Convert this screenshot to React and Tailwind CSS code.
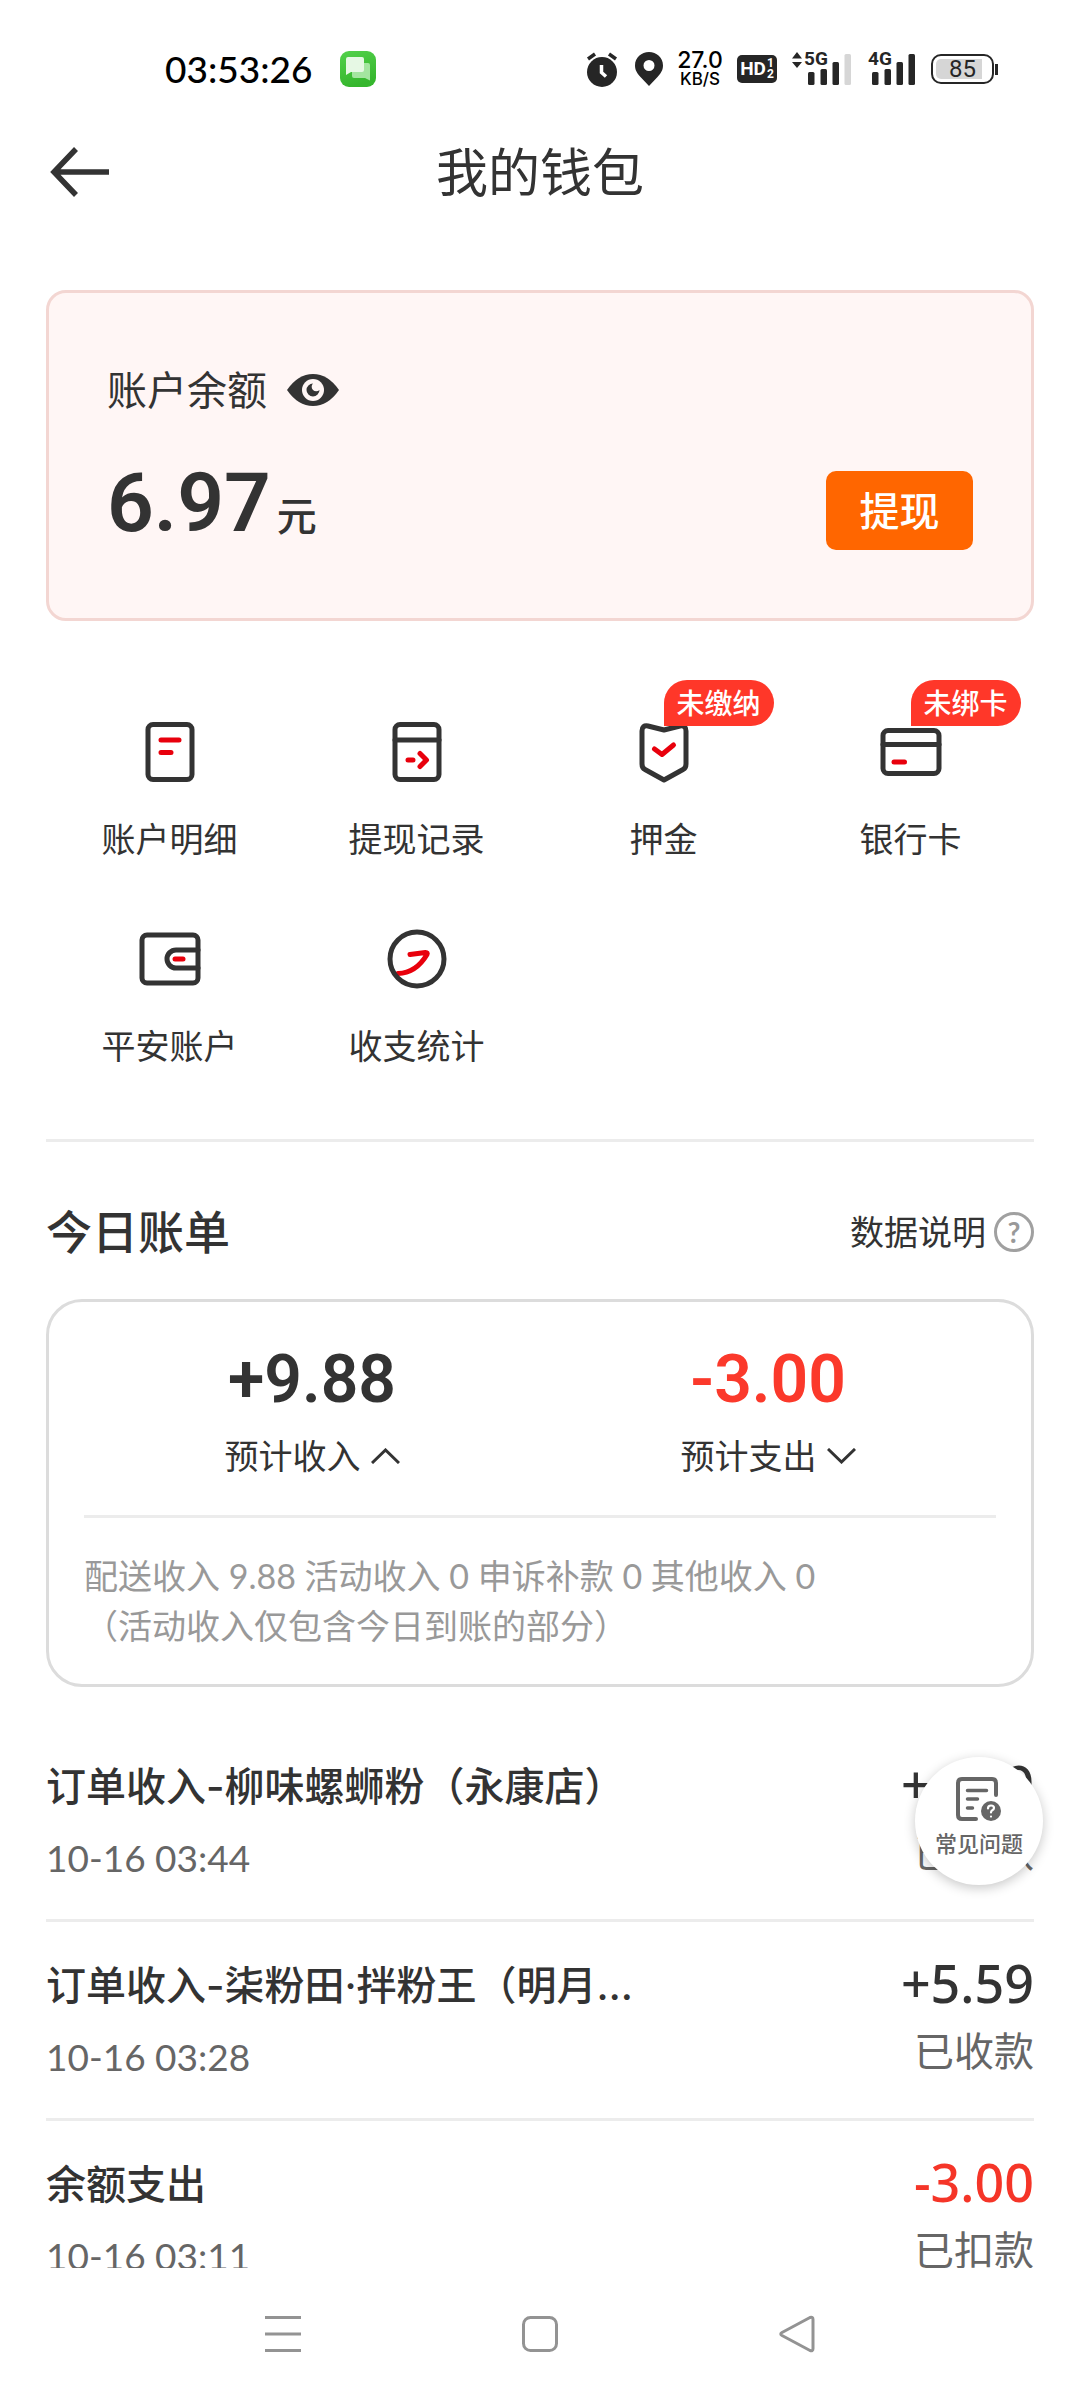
import React from "react";

const INK = "#333333";
const RED = "#e8000c";

function AlarmIcon() {
  return (
    <svg className="h-9 w-8" viewBox="0 0 32 36" aria-hidden="true">
      <circle cx="16" cy="21" r="15" fill="#262626" />
      <path d="M2 8 9 3M30 8 23 3" stroke="#262626" strokeWidth="3.5" />
      <path d="M15.500 14v7.500l4.500 4" fill="none" stroke="#fff" strokeWidth="3.500" />
    </svg>
  );
}

function PinIcon() {
  return (
    <svg className="h-9 w-7" viewBox="0 0 28 36" aria-hidden="true">
      <path
        d="M14 1C6.500 1 0 6.500 0 14.500c0 5 2.500 8 5.500 11.500L14 35l8.500-9c3-3.500 5.500-6.500 5.500-11.500C28 6.500 21.500 1 14 1Zm0 8a5.500 5.500 0 1 1 0 11 5.500 5.500 0 0 1 0-11Z"
        fill="#262626"
      />
    </svg>
  );
}

function MessageAppIcon() {
  return (
    <svg className="size-9" viewBox="0 0 36 36" aria-hidden="true">
      <defs>
        <linearGradient id="msg" x1="0" y1="0" x2="0.3" y2="1">
          <stop offset="0" stopColor="#53d14b" />
          <stop offset="1" stopColor="#35b62d" />
        </linearGradient>
      </defs>
      <rect width="36" height="36" rx="9" fill="url(#msg)" />
      <path d="M13 12h15q2 0 2 2v15.500L25 27H14q-2 0-2-2V14Z" fill="#a4e5a0" />
      <path d="M8 6h14q2 0 2 2v11q0 2-2 2H11l-5 3V8q0-2 2-2Z" fill="#e6f8e4" />
    </svg>
  );
}

function Signal({ label, last, arrows }) {
  return (
    <span className="relative block h-9 w-[60px]">
      <svg className="h-9 w-[60px]" viewBox="0 0 60 36" aria-hidden="true">
        {arrows && <path d="M0 7.500 5 1l5 6.500ZM0 11l5 6 5-6Z" fill="#262626" />}
        <rect x="16" y="21" width="6.500" height="13" rx="1.500" fill="#262626" />
        <rect x="28.500" y="18" width="6.500" height="16" rx="1.500" fill="#262626" />
        <rect x="40.500" y="11" width="6.500" height="23" rx="1.500" fill="#262626" />
        <rect x="52.500" y="3" width="6.500" height="31" rx="1.500" fill={last} />
      </svg>
      <span className="absolute left-3 top-0 font-['Roboto',sans-serif] text-[19px] leading-4 font-bold text-[#262626]">
        {label}
      </span>
    </span>
  );
}

function StatusBar() {
  return (
    <div className="flex h-[138px] shrink-0 items-center justify-between pl-[165px] pr-[82px] text-black">
      <div className="flex items-center gap-7">
        <span className="text-[37px] leading-[44px] font-medium">03:53:26</span>
        <MessageAppIcon />
      </div>
      <div className="flex items-center">
        <AlarmIcon />
        <span className="ml-[17px]"><PinIcon /></span>
        <span className="ml-3 flex w-[50px] flex-col items-center font-['Inter',sans-serif] font-medium">
          <span className="text-[23px] leading-5">27.0</span>
          <span className="text-[17px] leading-[18px]">KB/S</span>
        </span>
        <span className="ml-3 flex h-7 w-10 items-center justify-center gap-px rounded-[5px] bg-[#262626] font-['Roboto',sans-serif] font-bold text-white">
          <span className="text-[19px] leading-7">HD</span>
          <span className="flex flex-col text-xs leading-[11px]">
            <span>1</span>
            <span>2</span>
          </span>
        </span>
        <span className="ml-[15px]"><Signal label="5G" last="#d6d6d6" arrows /></span>
        <span className="ml-1"><Signal label="4G" last="#262626" /></span>
        <span className="ml-[15px] flex items-center gap-px">
          <span className="flex h-[30px] w-[63px] items-center rounded-[10px] border-2 border-[#262626] p-[3px]">
            <span className="flex h-full w-[46px] items-center justify-end rounded-l-[5px] bg-[#d6d6d6] pr-[6px] font-['Roboto',sans-serif] text-2xl leading-5 text-[#262626]">
              85
            </span>
          </span>
          <span className="h-[11px] w-[3px] bg-[#262626]" />
        </span>
      </div>
    </div>
  );
}

function EyeIcon() {
  return (
    <svg className="h-8 w-[52px]" viewBox="0 0 52 32" aria-hidden="true">
      <path d="M0 16Q11 0 26 0t26 16Q41 32 26 32T0 16Z" fill={INK} />
      <circle cx="26" cy="16" r="11" fill="#fff6f5" />
      <path d="M26 9.500a6.500 6.500 0 1 0 6.500 6.500 4.500 4.500 0 0 1-6.500-6.500Z" fill={INK} />
    </svg>
  );
}

const stroke = { fill: "none", strokeWidth: 5, strokeLinecap: "round", strokeLinejoin: "round" };

function Icon({ children }) {
  return (
    <svg className="size-[72px]" viewBox="0 0 72 72" aria-hidden="true" {...stroke} stroke={INK}>
      {children}
    </svg>
  );
}

const services = [
  {
    label: "账户明细",
    icon: (
      <Icon>
        <rect x="14" y="8.500" width="44" height="55" rx="5" />
        <path d="M27 24h18M27 36.500h10" stroke={RED} />
      </Icon>
    ),
  },
  {
    label: "提现记录",
    icon: (
      <Icon>
        <rect x="14" y="8.500" width="44" height="55" rx="5" />
        <path d="M14 24h44" />
        <path d="M27 44h5M39 37.500l6.500 6.500-6.500 6.500" stroke={RED} />
      </Icon>
    ),
  },
  {
    label: "押金",
    badge: "未缴纳",
    icon: (
      <Icon>
        <path d="M14 15q0-6 6-5l16 4 16-4q6-1 6 5v33q0 4-3 5.500L36 64 17 53.500q-3-1.500-3-5.500Z" />
        <path d="M26.500 33l7.500 5.500L45.500 29" stroke={RED} />
      </Icon>
    ),
  },
  {
    label: "银行卡",
    badge: "未绑卡",
    icon: (
      <Icon>
        <rect x="8" y="14.500" width="56" height="43" rx="5" />
        <path d="M8 28.500h56" />
        <path d="M19 46h10.500" stroke={RED} />
      </Icon>
    ),
  },
  {
    label: "平安账户",
    icon: (
      <Icon>
        <rect x="8" y="12" width="56" height="48" rx="5" />
        <path d="M64 27H42a9 9 0 0 0 0 18h22" />
        <path d="M41 36h8" stroke={RED} />
      </Icon>
    ),
  },
  {
    label: "收支统计",
    icon: (
      <Icon>
        <path d="M17 50.500Q35 50 46 31.500q1-2-1.500-2L29 31.500" stroke={RED} />
        <circle cx="36" cy="36" r="27" />
      </Icon>
    ),
  },
];

function Chevron({ up }) {
  return (
    <svg className="h-4 w-[29px]" viewBox="0 0 29 16" fill="none" stroke={INK} strokeWidth="3" aria-hidden="true">
      <path d={up ? "M1 15 14.500 2 28 15" : "M1 1l13.500 13L28 1"} />
    </svg>
  );
}

const totals = [
  { value: "+9.88", label: "预计收入", up: true, color: "text-[#333333]" },
  { value: "-3.00", label: "预计支出", up: false, color: "text-[#fb392b]" },
];

const records = [
  { title: "订单收入-柳味螺蛳粉（永康店）", time: "10-16 03:44", amount: "+4.29", status: "已收款", color: "text-[#333333]" },
  { title: "订单收入-柒粉田·拌粉王（明月…", time: "10-16 03:28", amount: "+5.59", status: "已收款", color: "text-[#333333]" },
  { title: "余额支出", time: "10-16 03:11", amount: "-3.00", status: "已扣款", color: "text-[#f53528]" },
];

export default function App() {
  return (
    <div className="flex h-screen flex-col overflow-hidden bg-white font-['Lato','Noto_Sans_CJK_SC',sans-serif] text-[#333333]">
      <StatusBar />
      <header className="grid h-[68px] shrink-0 grid-cols-[1fr_auto_1fr] items-center px-[46px]">
        <button type="button" aria-label="返回" className="justify-self-start">
          <svg className="h-[52px] w-16" viewBox="0 0 64 52" fill="none" stroke={INK} strokeWidth="5.500" aria-hidden="true">
            <path d="M30 3 8 26l22 23M8 26h55" />
          </svg>
        </button>
        <h1 className="text-[52px] leading-[68px] font-normal">我的钱包</h1>
      </header>

      <div className="relative min-h-0 flex-1">
        <main className="h-full overflow-hidden px-[46px]">
          <section className="mt-[84px] rounded-[20px] border-[3px] border-[#f3d6d2] bg-[#fff6f5] px-[58px] pt-[67px] pb-[68px]">
            <div className="flex items-center gap-5">
              <h2 className="text-[40px] leading-[60px] font-normal">账户余额</h2>
              <button type="button" aria-label="显示余额"><EyeIcon /></button>
            </div>
            <div className="mt-[51px] flex items-start justify-between">
              <p className="flex items-baseline gap-1.5">
                <span className="font-['Roboto',sans-serif] text-[82px] leading-[64px] font-semibold">6.97</span>
                <span className="text-[40px] leading-10 font-medium">元</span>
              </p>
              <button type="button" className="h-[79px] w-[147px] rounded-[10px] bg-[#ff6600] text-[40px] leading-[60px] font-medium text-white">
                提现
              </button>
            </div>
          </section>

          <nav className="mt-[95px] grid grid-cols-4 gap-y-[59px]">
            {services.map((s) => (
              <button key={s.label} type="button" className="relative flex flex-col items-center gap-[26px]">
                {s.icon}
                <span className="text-[34px] leading-[50px]">{s.label}</span>
                {s.badge && (
                  <span className="absolute -top-9 left-1/2 h-[46px] rounded-full rounded-bl-sm bg-[#ff3729] px-[13px] text-[28px] leading-[46px] font-medium text-white">
                    {s.badge}
                  </span>
                )}
              </button>
            ))}
          </nav>

          <hr className="mt-[68px] h-[3px] border-0 bg-[#ececec]" />

          <div className="mt-[60px] flex items-center justify-between">
            <h2 className="text-[46px] leading-[60px] font-medium">今日账单</h2>
            <button type="button" className="flex items-center gap-2 text-[34px] leading-[50px]">
              数据说明
              <span className="flex size-10 items-center justify-center rounded-full border-[3px] border-[#a0a0a0] text-[28px] leading-8 font-bold text-[#999999]">
                ?
              </span>
            </button>
          </div>

          <section className="mt-[37px] rounded-[36px] border-[3px] border-[#dcdcdc] px-[35px] pt-12 pb-[33px]">
            <div className="grid grid-cols-2">
              {totals.map((t) => (
                <button key={t.label} type="button" className="flex flex-col items-center gap-[21px]">
                  <span className={`font-['Roboto',sans-serif] text-[66px] leading-[60px] font-semibold ${t.color}`}>{t.value}</span>
                  <span className="flex items-center gap-2.5 text-[34px] leading-[50px]">
                    {t.label}
                    <Chevron up={t.up} />
                  </span>
                </button>
              ))}
            </div>
            <hr className="mt-[34px] h-[3px] border-0 bg-[#ececec]" />
            <p className="mt-[33px] text-[34px] leading-[50px] text-[#999999]">
              配送收入 9.88 活动收入 0 申诉补款 0 其他收入 0<br />（活动收入仅包含今日到账的部分）
            </p>
          </section>

          <ul className="mt-9">
            {records.map((r) => (
              <li key={r.time} className="flex h-[199px] justify-between gap-8 border-b-[3px] border-[#ececec]">
                <div className="pt-[34px]">
                  <h3 className="font-['Inter','Noto_Sans_CJK_SC',sans-serif] text-[40px] leading-[60px] font-medium">{r.title}</h3>
                  <p className="mt-4 text-[37px] leading-[50px] text-[#666666]">{r.time}</p>
                </div>
                <div className="pt-[31px] text-right">
                  <p className={`font-['Noto_Sans',sans-serif] text-[52px] leading-[60px] font-medium ${r.color}`}>{r.amount}</p>
                  <p className="mt-[10px] text-[40px] leading-[56px] text-[#666666]">{r.status}</p>
                </div>
              </li>
            ))}
          </ul>
        </main>

        <button
          type="button"
          className="absolute right-[37px] bottom-[383px] flex size-32 flex-col items-center rounded-full bg-white pt-5 text-[#666666] shadow-[0_3px_12px_rgba(0,0,0,0.22)]"
        >
          <svg className="h-[46px] w-12" viewBox="0 0 48 46" fill="none" stroke="#666666" strokeWidth="4" strokeLinecap="round" aria-hidden="true">
            <path d="M41 18V6q0-4-4-4H7Q3 2 3 6v32q0 4 4 4h14" />
            <path d="M12.500 13.500h19M12.500 22h10M12.500 31h5" strokeWidth="3.500" />
            <circle cx="36" cy="34" r="10" fill="#666666" stroke="none" />
            <path d="M33 31.500q0-3 3-3t3 2.500q0 1.500-2 2.500-1 .500-1 2M36 39.500v.100" stroke="#fff" strokeWidth="2.200" />
          </svg>
          <span className="mt-1.5 text-[22px] leading-[30px] font-medium">常见问题</span>
        </button>
      </div>

      <footer className="flex h-[132px] shrink-0 items-center justify-around px-[154px]">
        <button type="button" aria-label="最近任务">
          <svg className="size-10" viewBox="0 0 40 40" stroke="#939393" strokeWidth="3" aria-hidden="true">
            <path d="M2 3.500h36M2 20h36M2 36.500h36" />
          </svg>
        </button>
        <button type="button" aria-label="主页">
          <svg className="size-10" viewBox="0 0 40 40" fill="none" stroke="#939393" strokeWidth="3" aria-hidden="true">
            <rect x="3.500" y="3.500" width="33" height="33" rx="7" />
          </svg>
        </button>
        <button type="button" aria-label="返回上一页">
          <svg className="size-10" viewBox="0 0 40 40" fill="none" stroke="#939393" strokeWidth="3" strokeLinejoin="round" aria-hidden="true">
            <path d="M33 3.500 5 18.500q-2.500 1.500 0 3L33 36.500q3 1 3-2v-29q0-3-3-2Z" />
          </svg>
        </button>
      </footer>
    </div>
  );
}
